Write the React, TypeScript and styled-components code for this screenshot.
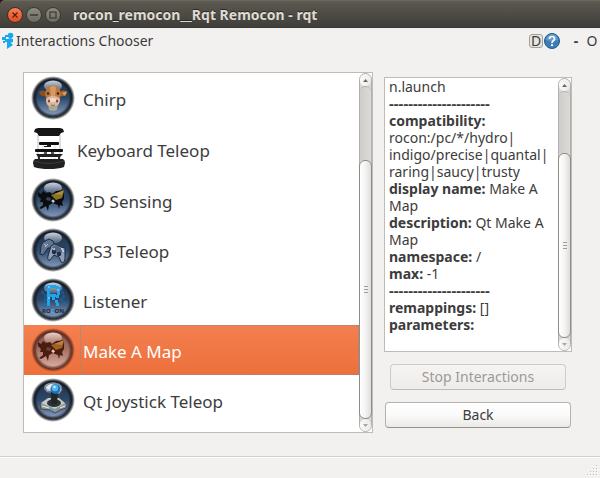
import React, { useId } from "react";
import styled, { createGlobalStyle, css } from "styled-components";

const GlobalStyle = createGlobalStyle`
  * { box-sizing: border-box; }
  body {
    margin: 0;
    background: #f2f1f0;
    color: #3c3c3c;
    font-family: "Noto Sans", "Open Sans", sans-serif;
    font-size: 14px;
  }
  button { font: inherit; color: inherit; cursor: default; }
`;

const Window = styled.div`
  display: flex;
  flex-direction: column;
  min-height: 100vh;
  background: #f2f1f0;
`;

const TitleBar = styled.header`
  display: flex;
  align-items: center;
  gap: 3px;
  height: 28px;
  padding: 0 7px;
  background: linear-gradient(#5f5d53, #58564d 3px, #3e3d39);
  border-top: 1px solid #6b685f;
  border-radius: 5px 0 0 0;
  box-shadow: inset 0 -1px #3a3935;
`;

const Corner = styled.div`
  background: #35101f;
`;

const WindowButton = styled.button<{ $close?: boolean }>`
  display: grid;
  place-items: center;
  width: 16px;
  height: 16px;
  padding: 0;
  border: 1px solid #3b3a35;
  border-radius: 50%;
  background: linear-gradient(#8f8c82, #6c6a62);
  color: #3b3a36;
  ${(p) =>
    p.$close &&
    css`
      background: linear-gradient(#f4815b, #df4e20);
      border-color: #4b2a1e;
      color: #5c210d;
    `}
`;

const WindowTitle = styled.h1`
  margin: 0 0 0 9px;
  color: #dfdbd2;
  font-size: 14px;
  line-height: 20px;
  font-weight: 700;
  text-shadow: 0 -1px #2b2a27;
  white-space: nowrap;
`;

const DockBar = styled.div`
  display: flex;
  align-items: center;
  height: 26px;
  padding: 0 0 0 2px;
`;

const DockTitle = styled.h2`
  flex: 1;
  margin: 0;
  font-size: 14px;
  line-height: 20px;
  font-weight: 400;
`;

const DockTools = styled.div`
  display: flex;
  align-items: center;
`;

const DButton = styled.button`
  width: 14px;
  height: 14px;
  margin-right: 1px;
  padding: 0;
  border: 1px solid #a5a19a;
  border-radius: 3px;
  background: #e6e4e1;
  line-height: 12px;
`;

const PlainButton = styled.button<{ $bold?: boolean }>`
  width: 16px;
  height: 20px;
  padding: 0;
  border: 0;
  background: none;
  line-height: 20px;
  font-weight: ${(p) => (p.$bold ? 700 : 400)};
`;

const HelpButton = styled(PlainButton)`
  display: grid;
  place-items: center;
  margin-right: 8px;
`;

const Content = styled.main`
  flex: 1;
  display: grid;
  grid-template-columns: minmax(0, 1fr) 188px;
  gap: 11px;
  padding: 18px 28px 23px 23px;
`;

const Frame = styled.div`
  display: flex;
  min-height: 0;
  border: 1px solid #bfbbb6;
  background: #fff;
`;

const List = styled.ul`
  flex: 1;
  min-width: 0;
  margin: 0;
  padding: 0;
  list-style: none;
`;

const Item = styled.button<{ $selected?: boolean; $tall?: boolean }>`
  display: flex;
  align-items: stretch;
  width: 100%;
  height: ${(p) => (p.$tall ? 52 : 50)}px;
  padding: 0;
  border: 0;
  background: ${(p) => (p.$selected ? "linear-gradient(#f47f50, #ec703c)" : "transparent")};
  color: ${(p) => (p.$selected ? "#fff" : "#3c3c3c")};
  font-size: 17px;
  text-align: left;
`;

const IconCell = styled.span<{ $narrow?: boolean }>`
  display: flex;
  align-items: center;
  flex: none;
  width: ${(p) => (p.$narrow ? 50 : 56)}px;
  padding-left: ${(p) => (p.$narrow ? 8 : 7)}px;
`;

const ItemLabel = styled.span<{ $selected?: boolean }>`
  flex: 1;
  display: flex;
  align-items: center;
  padding: 2px 2px 0;
  border: 1px dotted ${(p) => (p.$selected ? "#8d8f84" : "transparent")};
`;

const Bar = styled.div`
  flex: none;
  display: flex;
  flex-direction: column;
  width: 13px;
  border: 1px solid #b3afaa;
  border-radius: 7px;
  background: #d9d7d4;
`;

const Arrow = styled.button`
  display: grid;
  place-items: center;
  height: 12px;
  padding: 0;
  border: 0;
  border-radius: 6px;
  background: linear-gradient(90deg, #fafafa, #ebeae8);
  color: #6b6863;
`;

const Trough = styled.div<{ $grow: number }>`
  flex: ${(p) => p.$grow} 1 0;
  border-top: 1px solid #b3afaa;
  border-radius: 6px 6px 0 0;
  background: linear-gradient(90deg, #cfcdca, #dddbd8);
`;

const Thumb = styled.div<{ $grow: number }>`
  flex: ${(p) => p.$grow} 1 0;
  display: flex;
  flex-direction: column;
  align-items: center;
  justify-content: center;
  gap: 2px;
  margin: 0 -1px;
  border: 1px solid #8f8c87;
  border-radius: 6px;
  background: linear-gradient(90deg, #fff, #f4f3f2 50%, #dfddda);
`;

const Grip = styled.i`
  width: 4px;
  height: 1px;
  background: #a19d98;
`;

const Side = styled.aside`
  display: flex;
  flex-direction: column;
  padding-top: 5px;
`;

const DetailFrame = styled(Frame)`
  flex: 1;
`;

const Details = styled.div`
  flex: 1;
  min-width: 0;
  padding: 0 0 17px 4px;
  line-height: 17px;
  white-space: nowrap;
`;

const Separator = styled.b`
  display: block;
  font-size: 15px;
  line-height: 17px;
`;

const ActionButton = styled.button<{ $inset?: boolean }>`
  height: 26px;
  margin: ${(p) => (p.$inset ? "12px 6px 0" : "12px 1px 5px")};
  padding: 0;
  border: 1px solid #b5b1ab;
  border-bottom-color: #96928c;
  border-radius: 4px;
  background: linear-gradient(#fff, #fafafa 50%, #ebeae8);
  line-height: 20px;
  &:disabled {
    border-color: #cfccc8;
    border-bottom-color: #bebbb7;
    background: linear-gradient(#f5f4f3, #edeceb);
    color: #9c9a97;
  }
`;

const StatusBar = styled.footer`
  display: flex;
  justify-content: flex-end;
  align-items: flex-end;
  height: 22px;
  border-top: 1px solid #d2cfcc;
  box-shadow: inset 0 1px #fff;
  padding: 1px;
`;

function ScrollBar({ before, size, label }: { before: number; size: number; label: string }) {
  return (
    <Bar role="scrollbar" aria-label={label} aria-valuenow={100}>
      <Arrow aria-label="Scroll up">
        <svg width="5" height="3"><path d="M0 3L2.5 0L5 3Z" fill="currentColor" /></svg>
      </Arrow>
      <Trough $grow={before} />
      <Thumb $grow={size}><Grip /><Grip /><Grip /></Thumb>
      <Arrow aria-label="Scroll down">
        <svg width="5" height="3"><path d="M0 0L2.5 3L5 0Z" fill="#aaa6a1" /></svg>
      </Arrow>
    </Bar>
  );
}

function Orb({ warm, children }: { warm?: boolean; children: React.ReactNode }) {
  const id = useId();
  return (
    <svg width="44" height="44" viewBox="0 0 44 44" aria-hidden="true">
      <defs>
        <linearGradient id={id + "b"} x1="0" y1="0" x2="0" y2="1">
          <stop offset="0" stopColor={warm ? "#805048" : "#1d3149"} />
          <stop offset=".5" stopColor={warm ? "#a67266" : "#2d4869"} />
          <stop offset="1" stopColor={warm ? "#dcb1a4" : "#8b9fc2"} />
        </linearGradient>
        <radialGradient id={id + "s"}>
          <stop offset=".84" stopColor={warm ? "#55281d" : "#10161d"} />
          <stop offset=".9" stopColor={warm ? "#6e2f1c" : "#14181d"} stopOpacity=".75" />
          <stop offset="1" stopColor={warm ? "#94401f" : "#1c2025"} stopOpacity="0" />
        </radialGradient>
        <radialGradient id={id + "e"}>
          <stop offset=".84" stopColor={warm ? "#55281d" : "#10161d"} stopOpacity="0" />
          <stop offset="1" stopColor={warm ? "#55281d" : "#10161d"} stopOpacity=".9" />
        </radialGradient>
        <linearGradient id={id + "g"} x1="0" y1="0" x2="0" y2="1">
          <stop offset="0" stopColor={warm ? "#f5d7cc" : "#d5dce8"} stopOpacity=".95" />
          <stop offset="1" stopColor={warm ? "#f5d7cc" : "#d5dce8"} stopOpacity=".2" />
        </linearGradient>
      </defs>
      <circle cx="22" cy="22" r="22" fill={`url(#${id}s)`} />
      <circle cx="22" cy="22" r="18.5" fill={`url(#${id}b)`} />
      <circle cx="22" cy="22" r="18.5" fill={`url(#${id}e)`} />
      <ellipse cx="22" cy="10" rx="9" ry="5.5" fill={`url(#${id}g)`} />
      {children}
    </svg>
  );
}

const CowIcon = () => (
  <Orb>
    <path d="M17 27Q22 25 27 27L26 34Q22 36 18 34Z" fill="#a9a993" />
    <path d="M16 16Q11 13 8 16Q9 21 15 20Z" fill="#8b4d22" />
    <path d="M28 16Q33 13 36 16Q35 21 29 20Z" fill="#a96127" />
    <path d="M31 17L36 15.5L34 20Z" fill="#dca44a" />
    <path d="M16 11Q22 8 28 11L30 18L28.5 24L26 29H18L15.5 24L14 18Z" fill="#b97942" />
    <path d="M19 11Q22 9 25 11L24 21H20Z" fill="#d49b63" />
    <path d="M15 23Q17 20 21.5 20Q27 20 29 23Q29 29 25 30H18Q15 29 15 23Z" fill="#e0b79c" />
    <path d="M18 23Q22 21 26 23L24 26H20Z" fill="#f0d8c6" />
    <circle cx="17" cy="17.5" r="1.2" fill="#3b2112" />
    <circle cx="27" cy="17.5" r="1.2" fill="#3b2112" />
    <ellipse cx="18" cy="25" rx="1" ry="1.5" fill="#70463a" />
    <ellipse cx="26" cy="25" rx="1" ry="1.5" fill="#70463a" />
    <path d="M20 29Q22 30 24 29" stroke="#8e6554" fill="none" />
  </Orb>
);

const MapIcon = ({ warm }: { warm?: boolean }) => (
  <Orb warm={warm}>
    <path
      d="M7 14L10 16L12 13L15 15L19 14L21 16L25 13L33 12V21L31 24L32 28L29 27L28 31L27 27L24 26L22 25L18 27L17 33L15 28L10 31L8 30L12 27V24L9 24L10 21L7 18Z"
      fill={warm ? "#4b1d10" : "#0b0c0e"}
    />
    <path d="M20 17L33 13L31 20L25 22Z" fill={warm ? "#a06127" : "#8a7328"} />
    <path d="M23 16L33 12L31 17Z" fill={warm ? "#bd8038" : "#aa913b"} />
    <path d="M16 19L20 20L19 23L15 22Z" fill={warm ? "#724035" : "#35455a"} />
    <circle cx="22" cy="23" r="1.5" fill={warm ? "#eac5ac" : "#b9d0c9"} />
    <path d="M22 25L24 23" stroke={warm ? "#e5a98b" : "#6d9090"} />
  </Orb>
);

const GamepadIcon = () => (
  <Orb>
    <path d="M12 14L18 11L22 13L24 18L21 20L17 20L12 27L9 26L10 18Z" fill="#60738f" stroke="#1d2b40" />
    <path d="M20 18L24 16L30 19L34 20L34 31Q33 36 30 34L28 29L23 27L19 32Q16 33 17 28Z" fill="#8da0bd" stroke="#1e2b3d" />
    <path d="M21 19L25 17L31 21L32 24L28 26L21 24Z" fill="#526782" />
    <circle cx="23" cy="24" r="2.2" fill="#202d41" />
    <circle cx="28" cy="26" r="2.2" fill="#202d41" />
    <path d="M13 16L16 18M14 19L17 16M21 20L24 22M22 22L24 20" stroke="#b4c3da" />
    <path d="M30 21H32M31 23H33" stroke="#d3dced" strokeWidth="1.5" />
  </Orb>
);

const pixelR = [
  [16, 7], [19, 7], [22, 7], [25, 8], [16, 10], [26, 11], [16, 13], [26, 14],
  [16, 16], [19, 16], [22, 16], [25, 17], [16, 19], [21, 19], [16, 22], [24, 22],
  [16, 25], [25, 25],
];

const ListenerIcon = () => (
  <Orb>
    <g fill="#1172b6" opacity=".5">
      {[[13, 8], [10, 13], [13, 16], [13, 20], [11, 24], [13, 26], [29, 9], [30, 13], [29, 20], [32, 23], [31, 17]].map(([x, y]) => (
        <rect key={`${x}-${y}`} x={x} y={y} width="3" height="3" />
      ))}
    </g>
    <g fill="#20a4ed">
      {pixelR.map(([x, y]) => <rect key={`${x}-${y}`} x={x} y={y} width="3" height="3" />)}
    </g>
    <g fill="#57c8ff">
      <rect x="17" y="8" width="2" height="2" /><rect x="26" y="11" width="2" height="2" />
      <rect x="17" y="19" width="2" height="2" />
    </g>
    <text x="22" y="35" textAnchor="middle" fontSize="6" fontWeight="700" fill="#17283d">
      RO<tspan fill="#2fb4ff">C</tspan>ON
    </text>
  </Orb>
);

const JoystickIcon = () => (
  <Orb>
    <path d="M9 26L15 22L30 22L36 26L35 30L29 32L24 35L19 32L10 31Z" fill="#8f9494" stroke="#454b50" />
    <path d="M10 25L17 20H28L34 25L24 31Z" fill="#c5c9c8" />
    <ellipse cx="23" cy="25" rx="7" ry="4" fill="#2e3336" />
    <path d="M20 13H27L26 25Q23 28 20 25Z" fill="#202629" />
    <path d="M14 10Q16 5 23 5Q30 5 31 12L28 16L22 13L16 14Z" fill="#aeb8be" stroke="#626d76" strokeWidth=".8" />
    <path d="M15 10Q17 6 22 6L18 12Z" fill="#e7ecee" />
    <circle cx="24.5" cy="11" r="4.8" fill="#1a75bd" />
    <circle cx="24" cy="10" r="3.2" fill="#4eb6f3" />
    <circle cx="23.5" cy="9" r="1.2" fill="#c9eeff" />
    <path d="M11 28L18 30M29 30L34 28" stroke="#edf0ef" />
    <path d="M20 31L22 32" stroke="#29b9db" strokeWidth="2" />
  </Orb>
);

const RobotIcon = () => (
  <svg width="34" height="44" viewBox="0 0 34 44" aria-hidden="true">
    <path d="M6 8V34M28 8V34" stroke="#bbb" />
    <path d="M11 17V34M23 17V34" stroke="#ddd" />
    <path d="M3 2L6 1H28L31 2L32 5L29 6L27 9H7L5 6L2 5Z" fill="#151515" />
    <rect x="7" y="15" width="20" height="3" rx="1" fill="#101010" />
    <path d="M15 18H19V20H12V19H15Z" fill="#181818" />
    <rect x="3" y="22" width="28" height="3" rx="1" fill="#111" />
    <path d="M4 27H31L28 30H6Z" fill="#222" />
    <path d="M12 25H15V27H12ZM19 25H22V27H19Z" fill="#555" />
    <path d="M3 32H31Q33 33 33 36L32 40Q26 42 17 42Q8 42 2 40L1 36Q1 33 3 32Z" fill="#202020" />
    <path d="M2 34Q17 39 32 34" stroke="#3c3c3c" fill="none" />
    <path d="M7 30V32M27 30V32" stroke="#333" strokeWidth="2" />
  </svg>
);

const LogoIcon = () => (
  <svg width="14" height="18" viewBox="0 0 14 18" aria-hidden="true">
    <g fill="#16a9ec">
      <circle cx="8.5" cy="3.5" r="2.8" />
      <rect x="3" y="3" width="4" height="2" />
      <path d="M0 5H4V7H6L8 6L11 7V10L8 11L5 10H3V8H0Z" />
      <path d="M5 9L8 10L11 13L5 17Z" />
      <rect x="1" y="9" width="2" height="2" />
    </g>
  </svg>
);

const HelpIcon = () => (
  <svg width="16" height="16" viewBox="0 0 16 16" aria-hidden="true">
    <circle cx="8" cy="8" r="7.5" fill="#3c7db8" stroke="#245886" />
    <path d="M2 7A6 6 0 0 1 14 7Q8 9 2 7Z" fill="#659cca" />
    <path d="M5.5 6Q5.5 3.5 8 3.5Q10.5 3.5 10.5 5.7Q10.5 7 9 8Q8 8.7 8 10" fill="none" stroke="#fff" strokeWidth="1.7" />
    <circle cx="8" cy="12.2" r="1.1" fill="#fff" />
  </svg>
);

const SizeGrip = () => (
  <svg width="12" height="12" viewBox="0 0 12 12" aria-hidden="true">
    {[[9, 0], [6, 3], [9, 3], [3, 6], [6, 6], [9, 6], [0, 9], [3, 9], [6, 9], [9, 9]].map(([x, y]) => (
      <g key={`${x}-${y}`}>
        <rect x={x + 1} y={y + 1} width="1" height="1" fill="#fff" />
        <rect x={x} y={y} width="1" height="1" fill="#c3c0bc" />
      </g>
    ))}
  </svg>
);

const interactions = [
  { name: "Chirp", icon: <CowIcon /> },
  { name: "Keyboard Teleop", icon: <RobotIcon />, narrow: true },
  { name: "3D Sensing", icon: <MapIcon /> },
  { name: "PS3 Teleop", icon: <GamepadIcon /> },
  { name: "Listener", icon: <ListenerIcon /> },
  { name: "Make A Map", icon: <MapIcon warm />, selected: true },
  { name: "Qt Joystick Teleop", icon: <JoystickIcon /> },
];

export default function App() {
  return (
    <Window>
      <GlobalStyle />
      <Corner>
        <TitleBar>
          <WindowButton $close aria-label="Close">
            <svg width="6" height="6"><path d="M0.5 0.5L5.5 5.5M5.5 0.5L0.5 5.5" stroke="currentColor" strokeWidth="1.3" /></svg>
          </WindowButton>
          <WindowButton aria-label="Minimize">
            <svg width="8" height="2"><path d="M0 1H8" stroke="currentColor" strokeWidth="1.5" /></svg>
          </WindowButton>
          <WindowButton aria-label="Maximize">
            <svg width="8" height="8"><rect x="1" y="1" width="6" height="6" fill="none" stroke="currentColor" strokeWidth="1.2" /></svg>
          </WindowButton>
          <WindowTitle>rocon_remocon__Rqt Remocon - rqt</WindowTitle>
        </TitleBar>
      </Corner>
      <DockBar>
        <LogoIcon />
        <DockTitle>Interactions Chooser</DockTitle>
        <DockTools>
          <DButton>D</DButton>
          <HelpButton aria-label="Help"><HelpIcon /></HelpButton>
          <PlainButton $bold>-</PlainButton>
          <PlainButton>O</PlainButton>
        </DockTools>
      </DockBar>
      <Content>
        <Frame>
          <List>
            {interactions.map((it) => (
              <li key={it.name}>
                <Item $selected={it.selected} $tall={it.narrow} aria-pressed={!!it.selected}>
                  <IconCell $narrow={it.narrow}>{it.icon}</IconCell>
                  <ItemLabel $selected={it.selected}>{it.name}</ItemLabel>
                </Item>
              </li>
            ))}
          </List>
          <ScrollBar before={74} size={259} label="Interactions" />
        </Frame>
        <Side>
          <DetailFrame>
            <Details>
              n.launch
              <Separator>---------------------</Separator>
              <b>compatibility:</b><br />
              rocon:/pc/*/hydro|<br />
              indigo/precise|quantal|<br />
              raring|saucy|trusty<br />
              <b>display name:</b> Make A<br />
              Map<br />
              <b>description:</b> Qt Make A<br />
              Map<br />
              <b>namespace:</b> /<br />
              <b>max:</b> -1
              <Separator>---------------------</Separator>
              <b>remappings:</b> []<br />
              <b>parameters:</b>
            </Details>
            <ScrollBar before={62} size={185} label="Details" />
          </DetailFrame>
          <ActionButton $inset disabled>Stop Interactions</ActionButton>
          <ActionButton>Back</ActionButton>
        </Side>
      </Content>
      <StatusBar><SizeGrip /></StatusBar>
    </Window>
  );
}
